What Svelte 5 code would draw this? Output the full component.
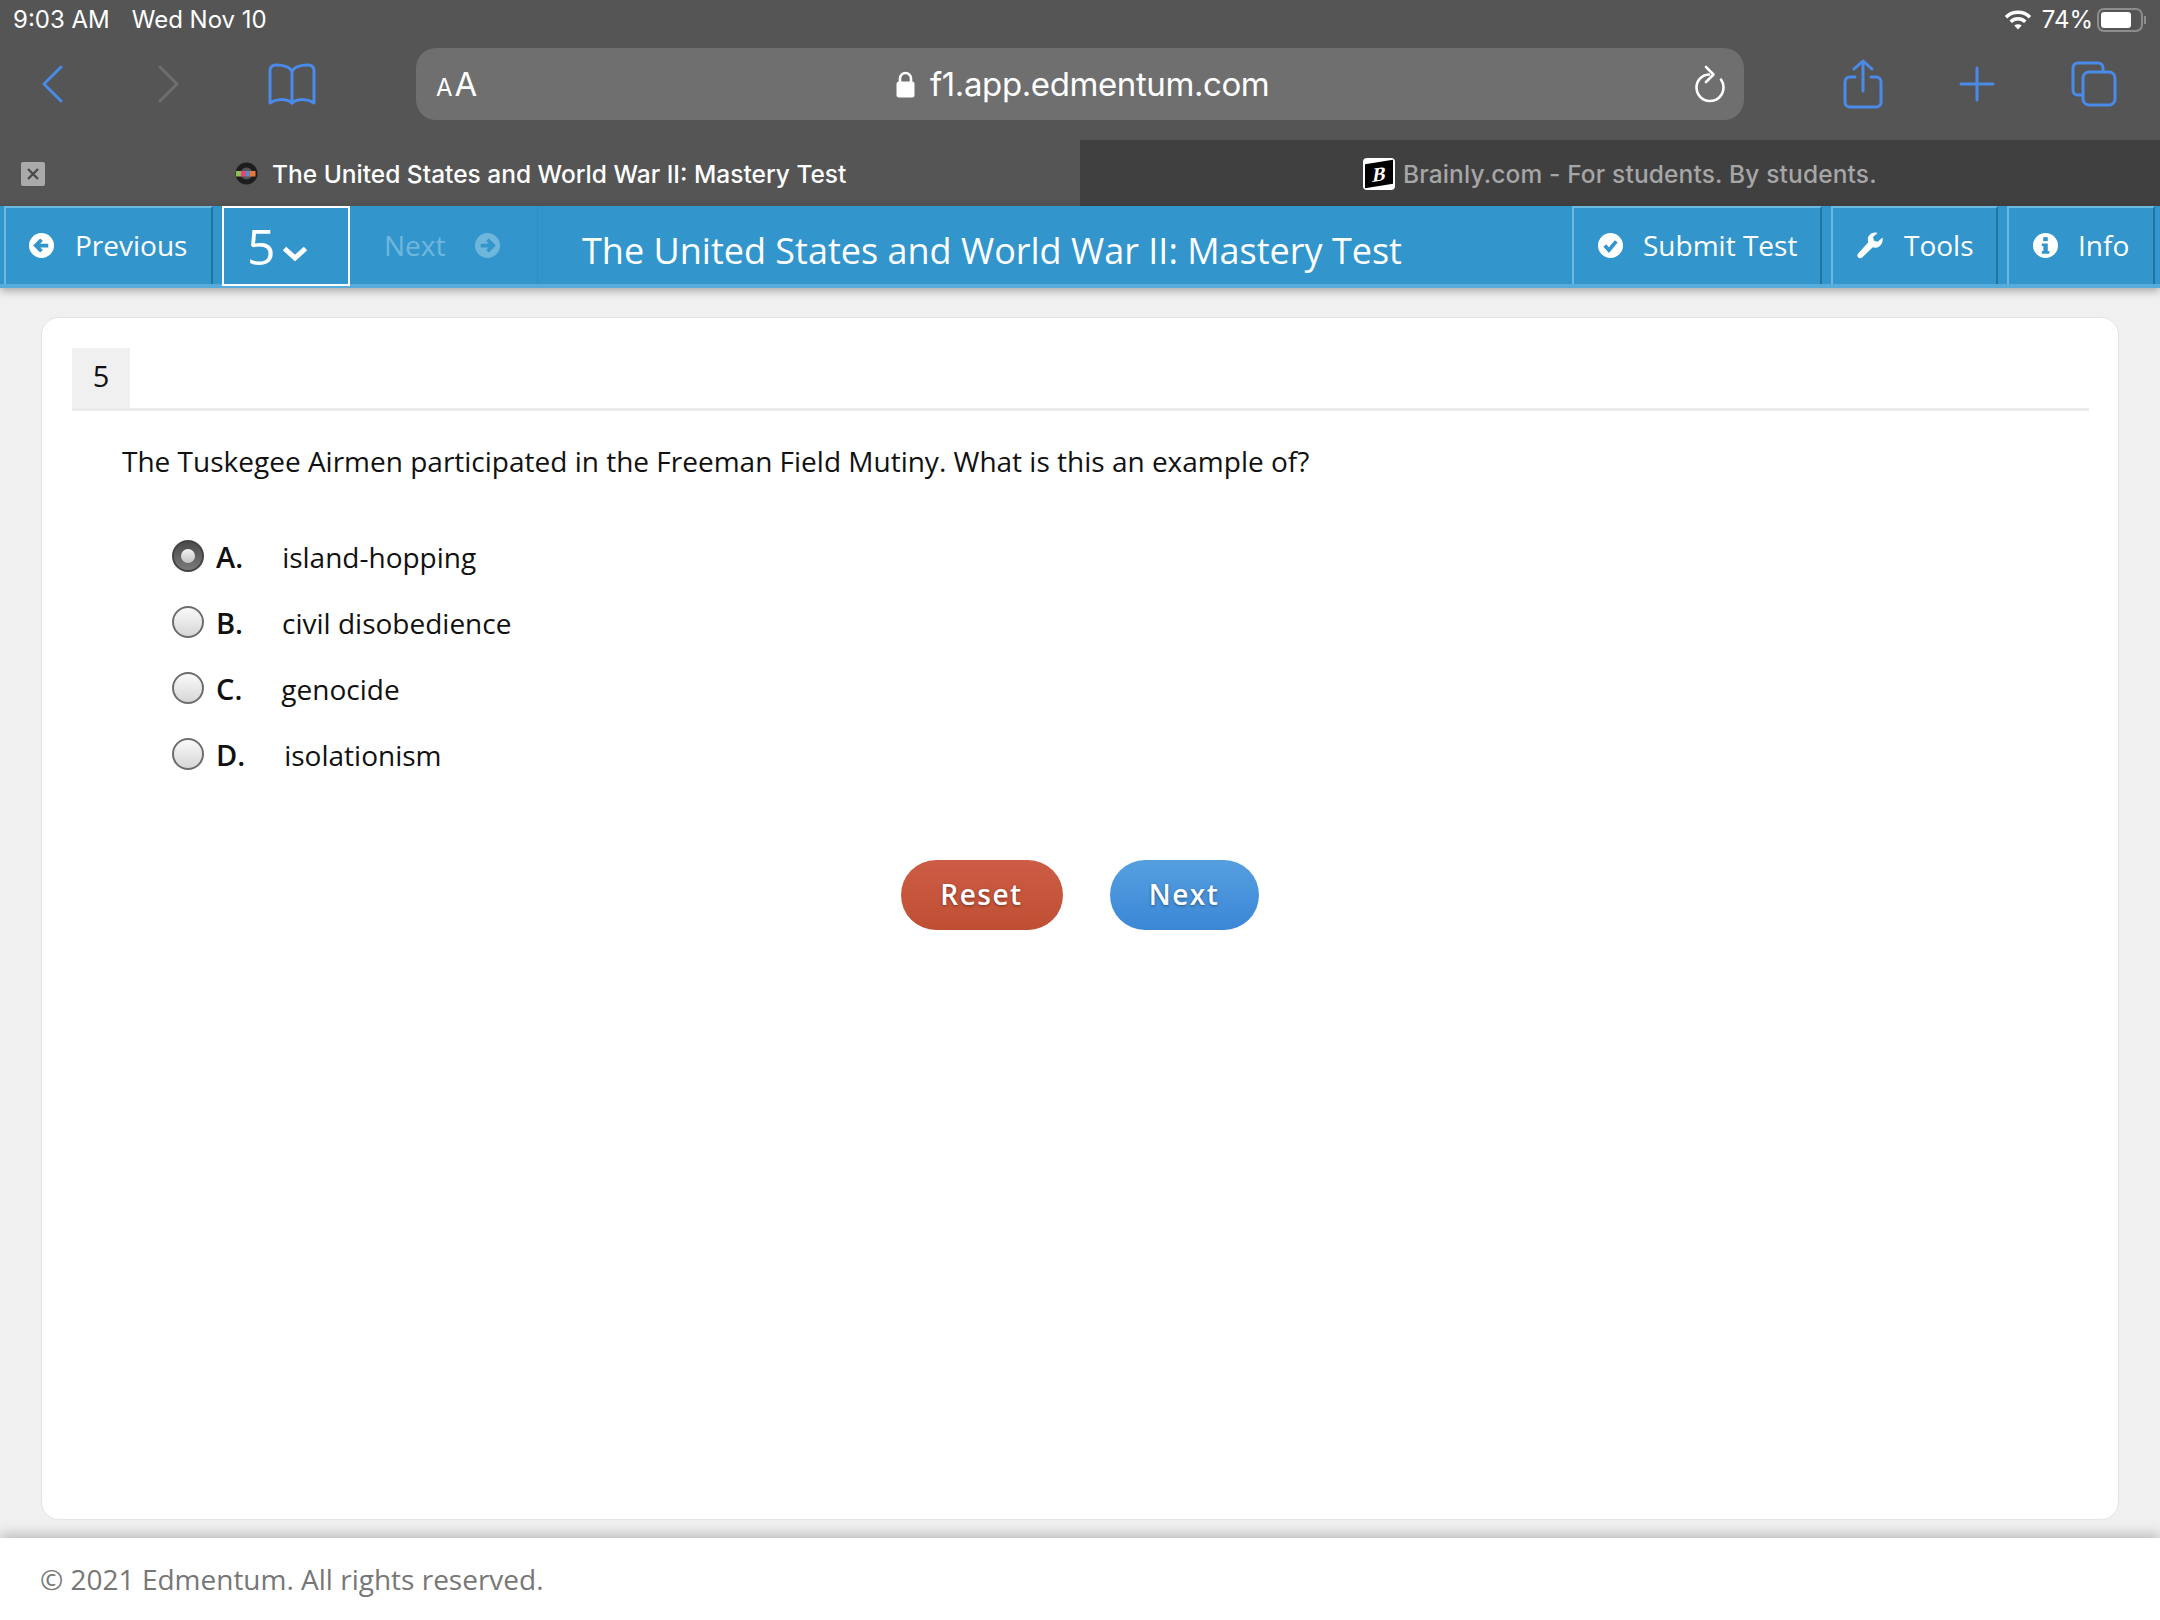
<script lang="ts">
  const options = [
    { key: "A.", text: "island-hopping", checked: true },
    { key: "B.", text: "civil disobedience", checked: false },
    { key: "C.", text: "genocide", checked: false },
    { key: "D.", text: "isolationism", checked: false }
  ];
</script>

<div class="page">
  <div class="chrome">
    <div class="status">
      <div class="status-left"><span>9:03 AM</span><span>Wed Nov 10</span></div>
      <div class="status-right">
        <svg width="28" height="22" viewBox="0 0 28 22" fill="none" stroke="#fff" stroke-width="3.4" stroke-linecap="butt">
          <path d="M2 8.2a17 17 0 0 1 24 0" />
          <path d="M6.7 12.8a10.4 10.4 0 0 1 14.6 0" />
          <path d="M14 20.6l3.7-4a5.4 5.4 0 0 0-7.4 0z" fill="#fff" stroke="none" />
        </svg>
        <span>74%</span>
        <div class="battery"><div class="battery-level"></div></div>
        <div class="battery-nub"></div>
      </div>
    </div>

    <div class="toolbar">
      <svg class="ic-back" width="22" height="38" viewBox="0 0 22 38" fill="none" stroke="#4a8ae8" stroke-width="3" stroke-linecap="round" stroke-linejoin="round"><path d="M20 2L3 19l17 17" /></svg>
      <svg class="ic-forward" width="22" height="38" viewBox="0 0 22 38" fill="none" stroke="#6e6e6e" stroke-width="3" stroke-linecap="round" stroke-linejoin="round"><path d="M2 2l17 17L2 36" /></svg>
      <svg class="ic-book" width="48" height="42" viewBox="0 0 48 42" fill="none" stroke="#4a8ae8" stroke-width="3" stroke-linejoin="round" stroke-linecap="round">
        <path d="M24 8C21 3 15 2 8 2 4 2 2 4 2 8v32c6-4 16-5 22 0 6-5 16-4 22 0V8c0-4-2-6-6-6-7 0-13 1-16 6z" />
        <path d="M24 8v32" />
      </svg>

      <div class="urlbar">
        <div class="aa"><span class="aa-small">A</span><span class="aa-big">A</span></div>
        <div class="url">
          <svg width="19" height="27" viewBox="0 0 19 27"><path d="M4 12V7.500a5.500 5.500 0 0 1 11 0V12" fill="none" stroke="#fff" stroke-width="2.600" /><rect x="0.500" y="10.500" width="18" height="16" rx="2.500" fill="#fff" /></svg>
          <span>f1.app.edmentum.com</span>
        </div>
        <svg class="ic-reload" width="32" height="38" viewBox="0 0 32 38" fill="none" stroke="#fff" stroke-width="2.600" stroke-linecap="round" stroke-linejoin="round">
          <path d="M15 9.500C7.500 10 2.500 15.500 2.500 22.500a13.500 13.500 0 0 0 27 0c0-3-1-6-2.500-8" />
          <path d="M12 2l7.500 7.500L12 17" />
        </svg>
      </div>

      <svg class="ic-share" width="40" height="50" viewBox="0 0 40 50" fill="none" stroke="#4a8ae8" stroke-width="3" stroke-linecap="round" stroke-linejoin="round">
        <path d="M12 18H7c-3 0-5 2-5 5v20c0 3 2 5 5 5h26c3 0 5-2 5-5V23c0-3-2-5-5-5h-5" />
        <path d="M20 32V2M11 10l9-8 9 8" />
      </svg>
      <svg class="ic-plus" width="36" height="36" viewBox="0 0 36 36" stroke="#4a8ae8" stroke-width="3" stroke-linecap="round"><path d="M18 2v32M2 18h32" /></svg>
      <svg class="ic-tabs" width="46" height="46" viewBox="0 0 46 46" fill="none" stroke="#4a8ae8" stroke-width="3" stroke-linejoin="round">
        <path d="M11 34H7c-3 0-5-2-5-5V7c0-3 2-5 5-5h20c3 0 5 2 5 5v4" />
        <rect x="12" y="11" width="32" height="33" rx="6" />
      </svg>
    </div>

    <div class="tabs">
      <div class="tab active">
        <div class="tab-close">
          <svg width="14" height="14" viewBox="0 0 14 14" stroke="#4a4a4a" stroke-width="2.400"><path d="M2 2l10 10M12 2L2 12" /></svg>
        </div>
        <svg class="favicon" width="23" height="23" viewBox="0 0 23 23">
          <circle cx="11.500" cy="11.500" r="8.500" fill="none" stroke="#1d1d1d" stroke-width="5" />
          <rect x="1" y="9" width="5" height="5.500" fill="#8cc152" />
          <rect x="6" y="9" width="5" height="5.500" fill="#e0457b" />
          <rect x="11" y="9" width="3.500" height="5.500" fill="#4a90d9" />
          <rect x="14.500" y="9" width="6" height="5.500" fill="#e9773b" />
        </svg>
        <span>The United States and World War II: Mastery Test</span>
      </div>
      <div class="tab inactive">
        <div class="brainly"><div class="brainly-mark">B</div></div>
        <span>Brainly.com - For students. By students.</span>
      </div>
    </div>
  </div>

  <nav class="nav">
    <div class="cell prev">
      <svg width="25" height="25" viewBox="0 0 24 24"><circle cx="12" cy="12" r="12" fill="#fff" /><path d="M18.500 12H7M12 6.500L6.500 12l5.500 5.500" fill="none" stroke="#3296cd" stroke-width="3.600" /></svg>
      <span>Previous</span>
    </div>
    <div class="select">
      <span>5</span>
      <svg width="26" height="16" viewBox="0 0 26 16" fill="none" stroke="#fff" stroke-width="5"><path d="M2.500 3.500L13 13 23.500 3.500" /></svg>
    </div>
    <div class="next-off">
      <span>Next</span>
      <svg width="25" height="25" viewBox="0 0 24 24"><circle cx="12" cy="12" r="12" fill="#6fb6dc" /><path d="M5.500 12H17M12 6.500l5.500 5.500-5.500 5.500" fill="none" stroke="#3296cd" stroke-width="3.600" /></svg>
    </div>
    <h1 class="title">The United States and World War II: Mastery Test</h1>
    <div class="cell submit">
      <svg width="25" height="25" viewBox="0 0 24 24"><circle cx="12" cy="12" r="12" fill="#fff" /><path d="M6.500 12l4 4.500 7-8.500" fill="none" stroke="#3296cd" stroke-width="3.600" /></svg>
      <span>Submit Test</span>
    </div>
    <div class="cell tools">
      <svg width="27" height="27" viewBox="0 0 27 27"><path d="M25.500 5.500l-4.800 4.300-3.700-1-1-3.700L20.500 1C16 -.500 11 2.500 10.800 7.500c0 1 .2 2 .5 2.800L1.200 21.500c-1.200 1.400-1.100 2.900 0 4 1.100 1.100 2.700 1.100 3.900 0L15.800 15.300c1 .4 2 .5 3 .4 4.800-.4 7.700-5.500 6.700-10.200z" fill="#fff" /></svg>
      <span>Tools</span>
    </div>
    <div class="cell info">
      <svg width="25" height="25" viewBox="0 0 24 24"><circle cx="12" cy="12" r="12" fill="#fff" /><rect x="9.800" y="4" width="4.400" height="3.800" fill="#3296cd" /><path d="M8.500 10h5.700v7.200h1.500V20H8.500v-2.800H10v-4.400H8.500z" fill="#3296cd" /></svg>
      <span>Info</span>
    </div>
  </nav>

  <main class="main">
    <section class="card">
      <div class="qnum-row"><div class="qnum"><span>5</span></div></div>
      <p class="question">The Tuskegee Airmen participated in the Freeman Field Mutiny. What is this an example of?</p>
      <div class="options">
        {#each options as opt}
          <div class="option">
            <span class="radio" class:checked={opt.checked}></span>
            <span class="opt-key">{opt.key}</span>
            <span class="opt-text">{opt.text}</span>
          </div>
        {/each}
      </div>
      <div class="actions">
        <button class="pill reset">Reset</button>
        <button class="pill next">Next</button>
      </div>
    </section>
  </main>

  <footer class="footer">© 2021 Edmentum. All rights reserved.</footer>
</div>

<style>
  :global(body) {
    margin: 0;
    background: #f0f0f0;
  }
  .page {
    width: 2160px;
    height: 1620px;
    display: flex;
    flex-direction: column;
    overflow: hidden;
    font-family: "Open Sans", "Noto Sans", sans-serif;
  }
  .chrome {
    background: #555;
    color: #fff;
    font-family: Inter, "Liberation Sans", sans-serif;
  }
  .status {
    height: 40px;
    display: flex;
    align-items: center;
    justify-content: space-between;
    padding: 0 13px;
    font-size: 24px;
    line-height: 40px;
  }
  .status-left {
    display: flex;
    gap: 22px;
  }
  .status-right {
    display: flex;
    align-items: center;
    margin-right: 1px;
  }
  .status-right svg {
    margin-right: -1px;
  }
  .status-right span {
    margin: 0 4px 0 11px;
  }
  .battery {
    width: 46px;
    height: 24px;
    box-sizing: border-box;
    border: 2px solid #8c8c8c;
    border-radius: 7px;
    padding: 2px;
  }
  .battery-level {
    width: 30px;
    height: 100%;
    background: #fff;
    border-radius: 3px;
  }
  .battery-nub {
    width: 2px;
    height: 8px;
    background: #8c8c8c;
    margin-left: 1px;
  }
  .toolbar {
    height: 100px;
    display: flex;
    align-items: center;
    padding-bottom: 12px;
    box-sizing: border-box;
  }
  .toolbar svg {
    flex: none;
  }
  .ic-back {
    margin-left: 41px;
  }
  .ic-forward {
    margin-left: 95px;
  }
  .ic-book {
    margin-left: 88px;
  }
  .urlbar {
    width: 1328px;
    height: 72px;
    margin-left: 100px;
    background: #6f6f6f;
    border-radius: 20px;
    display: flex;
    align-items: center;
    box-sizing: border-box;
    padding: 0 18px 0 20px;
    justify-content: space-between;
  }
  .aa {
    display: flex;
    align-items: baseline;
    gap: 2px;
    width: 460px;
  }
  .aa-small {
    font-size: 24px;
  }
  .aa-big {
    font-size: 33px;
  }
  .url {
    display: flex;
    align-items: center;
    gap: 15px;
    font-size: 33px;
    letter-spacing: -0.4px;
    flex: 1;
  }
  .ic-share {
    margin-left: 99px;
  }
  .ic-plus {
    margin-left: 76px;
  }
  .ic-tabs {
    margin-left: 76px;
  }
  .tabs {
    height: 66px;
    display: flex;
    font-size: 24.500px;
    font-weight: 500;
  }
  .tab {
    width: 1080px;
    display: flex;
    align-items: center;
    box-sizing: border-box;
    gap: 14px;
    padding-top: 1px;
  }
  .active {
    padding-left: 21px;
  }
  .inactive {
    background: #404040;
    color: #a6a6a6;
    padding-left: 283px;
    gap: 8px;
    letter-spacing: 0.14px;
  }
  .tab-close {
    width: 24px;
    height: 24px;
    background: #aaa;
    border-radius: 2px;
    display: flex;
    align-items: center;
    justify-content: center;
    margin-right: 176px;
  }
  .brainly {
    width: 32px;
    height: 32px;
    background: #fff;
    border-radius: 4px;
    display: flex;
    align-items: center;
    justify-content: center;
    overflow: hidden;
  }
  .brainly-mark {
    width: 28px;
    height: 24px;
    background: #000;
    color: #fff;
    transform: skewY(-9deg);
    display: flex;
    align-items: center;
    justify-content: center;
    font: italic bold 20px "Liberation Serif", serif;
  }
  .nav {
    height: 82px;
    background: #3296cd;
    border-bottom: 4px solid #57acdb;
    box-sizing: border-box;
    display: flex;
    color: #fff;
    font-size: 28px;
    position: relative;
    z-index: 2;
    box-shadow: 0 3px 8px rgba(0, 0, 0, 0.3);
  }
  .cell {
    display: flex;
    align-items: center;
    box-sizing: border-box;
    border-top: 2px solid #6cb9e2;
    border-left: 2px solid #6cb9e2;
    border-right: 2px solid #23739f;
    gap: 20px;
    padding-bottom: 2px;
  }
  .prev {
    width: 209px;
    margin-left: 4px;
    padding-left: 23px;
    gap: 21px;
  }
  .select {
    width: 128px;
    height: 80px;
    margin-left: 9px;
    border: 2px solid #fff;
    box-sizing: border-box;
    display: flex;
    align-items: center;
    padding-left: 23px;
    gap: 6px;
    font-size: 50px;
  }
  .select svg {
    margin-top: 14px;
  }
  .next-off {
    width: 188px;
    display: flex;
    align-items: center;
    padding-left: 34px;
    box-sizing: border-box;
    gap: 30px;
    color: #6fb6dc;
    border-right: 1px solid #2f8dc1;
  }
  .title {
    flex: 1;
    margin: 0;
    padding-left: 44px;
    font-size: 36px;
    font-weight: 400;
    line-height: 90px;
    white-space: nowrap;
  }
  .submit {
    width: 250px;
    padding-left: 24px;
  }
  .tools {
    width: 167px;
    margin-left: 9px;
    padding-left: 24px;
  }
  .info {
    width: 148px;
    margin: 0 5px 0 9px;
    padding-left: 24px;
  }
  .main {
    flex: 1;
    min-height: 0;
    background: #f0f0f0;
    padding: 29px 41px 18px 41px;
    display: flex;
  }
  .card {
    flex: 1;
    background: #fff;
    border: 1px solid #e4e4e4;
    border-radius: 18px;
    padding: 30px 29px 0 30px;
    box-sizing: border-box;
  }
  .qnum-row {
    border-bottom: 3px solid #ebebeb;
  }
  .qnum {
    width: 58px;
    height: 60px;
    background: #f0f0f0;
    display: flex;
    justify-content: center;
    font-size: 29px;
    line-height: 56px;
    color: #111;
  }
  .question {
    margin: 30px 0 0 50px;
    font-size: 28px;
    line-height: 40px;
    color: #111;
  }
  .options {
    margin: 42px 0 0 100px;
  }
  .option {
    height: 66px;
    display: flex;
    align-items: center;
    font-size: 28px;
    color: #111;
  }
  .radio {
    width: 32px;
    height: 32px;
    box-sizing: border-box;
    border-radius: 50%;
    border: 2px solid #6e6e6e;
    background: linear-gradient(#fafafa, #d6d6d6);
    margin: 0 12px 0 0;
    position: relative;
    flex: none;
  }
  .radio.checked {
    border-color: #444;
    background: linear-gradient(#4a4a4a, #7a7a7a);
  }
  .radio.checked::after {
    content: "";
    position: absolute;
    left: 7px;
    top: 7px;
    width: 14px;
    height: 14px;
    border-radius: 50%;
    background: linear-gradient(#f2f2f2, #c4c4c4);
  }
  .opt-key {
    font-weight: 600;
    margin-right: 39px;
    font-size: 29px;
  }
  .opt-text {
    padding-top: 2px;
  }
  .actions {
    display: flex;
    justify-content: center;
    gap: 47px;
    margin-top: 73px;
    padding-right: 2px;
  }
  .pill {
    height: 70px;
    border: 0;
    border-radius: 35px;
    color: #fff;
    font-family: inherit;
    font-size: 28px;
    font-weight: 600;
    letter-spacing: 1.500px;
    text-shadow: 0 1px 3px rgba(0, 0, 0, 0.4);
    padding: 0 0 3px;
  }
  .reset {
    width: 162px;
    background: linear-gradient(#cd5c46, #bf4f33);
  }
  .next {
    width: 149px;
    background: linear-gradient(#559fe0, #3b87d6);
  }
  .footer {
    height: 82px;
    background: #fff;
    display: flex;
    align-items: center;
    padding-left: 40px;
    font-size: 28px;
    color: #777;
    position: relative;
    box-shadow: 0 -4px 12px rgba(0, 0, 0, 0.22);
  }
</style>
